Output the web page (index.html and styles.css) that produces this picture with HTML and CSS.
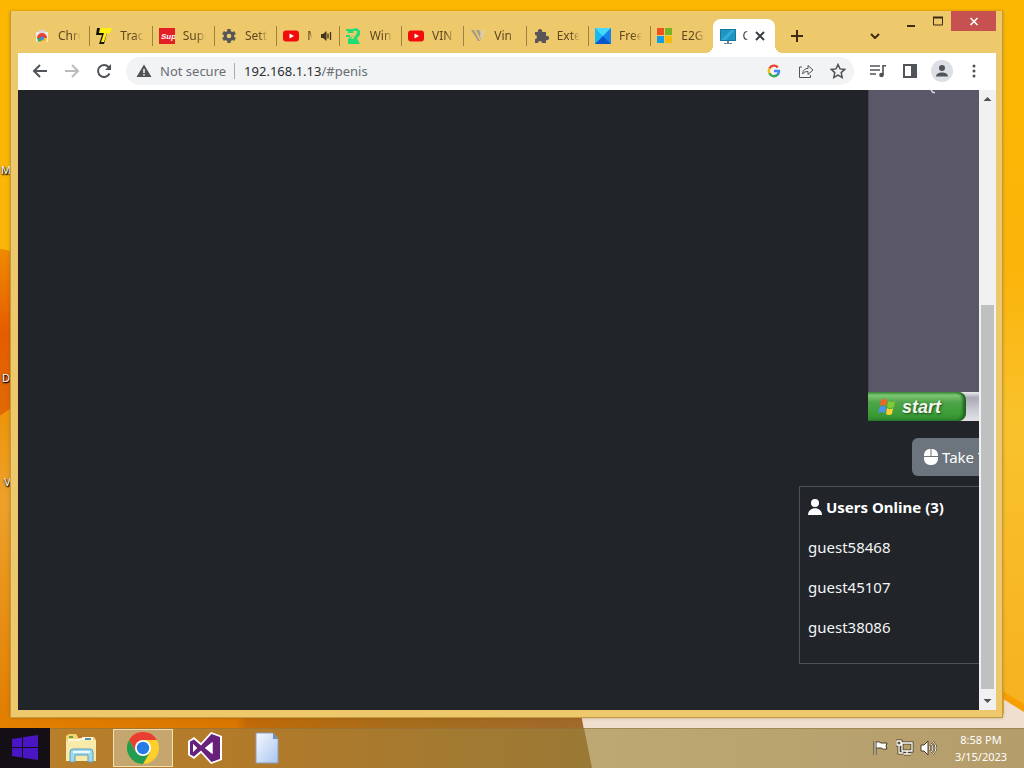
FILE: index.html
```html
<!DOCTYPE html>
<html lang="en">
<head>
<meta charset="utf-8">
<title>Desktop</title>
<link rel="stylesheet" href="styles.css">
</head>
<body>
<div class="desktop">
  <svg class="wallpaper" viewBox="0 0 1024 768" preserveAspectRatio="none" aria-hidden="true">
    <defs>
      <linearGradient id="sky" x2="0" y2="1"><stop offset="0" stop-color="#fcb800"/><stop offset=".35" stop-color="#fbb40a"/><stop offset=".55" stop-color="#f9c22c"/><stop offset="1" stop-color="#f6ae1e"/></linearGradient>
      <linearGradient id="petal" x2="0" y2="1"><stop offset="0" stop-color="#ef8a00"/><stop offset=".5" stop-color="#e65c00"/><stop offset="1" stop-color="#e06a05"/></linearGradient>
      <linearGradient id="low" x2="0" y2="1"><stop offset="0" stop-color="#ec9408"/><stop offset=".3" stop-color="#eda12a"/><stop offset="1" stop-color="#e07c00"/></linearGradient>
      <linearGradient id="floor"><stop offset="0" stop-color="#e38000"/><stop offset=".4" stop-color="#d87600"/><stop offset=".42" stop-color="#c06a08"/><stop offset=".7" stop-color="#a56d1c"/><stop offset="1" stop-color="#a1692c"/></linearGradient>
      <linearGradient id="barLeft"><stop offset="0" stop-color="#b9802c"/><stop offset=".45" stop-color="#b07a2a"/><stop offset="1" stop-color="#997936"/></linearGradient>
      <linearGradient id="barRight"><stop offset="0" stop-color="#bda873"/><stop offset="1" stop-color="#b49d6b"/></linearGradient>
    </defs>
    <path fill="url(#sky)" d="M0 0h1024v768H0z"/>
    <path fill="url(#petal)" d="M0 249q8 0 14 5v154L0 416z"/>
    <path fill="url(#low)" d="M0 416l14-10v324H0z"/>
    <path fill="url(#floor)" d="M0 714h590v16H0z"/>
    <path fill="#f0dfcf" d="M581 714h423l0-16 20 12v20H584z"/>
    <path fill="#f59f00" d="M1000 690l24 14v8l-24-15z"/>
    <path fill="url(#barLeft)" d="M0 728h600v40H0z"/>
    <path fill="url(#barRight)" d="M584 728h440v40H592z"/>
    <path stroke="#8d6c35" stroke-opacity=".5" d="M0 728.500h1024"/>
  </svg>
  <span class="shortcut shortcut-a">M</span>
  <span class="shortcut shortcut-b">D</span>
  <span class="shortcut shortcut-c">V</span>

  <main class="workspace">
    <section class="window">
      <header class="titlebar">
        <nav class="tabs" aria-label="Tabs">
          <a class="tab" href="#"><svg class="favicon" viewBox="0 0 16 16"><path fill="#f3ede6" d="M2 4h12v9.500H2z"/><path fill="#d5d9de" d="M5 2h6v3H5z"/><path fill="#e54335" d="M3 10a5 5 0 0 1 10 0z"/><path fill="#34a853" d="M3 10h5l-1 3.500H4z"/><path fill="#fbbc05" d="M8 10h5l-1 3.500H7z"/><circle cx="8" cy="10.500" r="2" fill="#4285f4"/></svg><span>Chro</span></a>
          <a class="tab" href="#"><svg class="favicon" viewBox="0 0 16 16"><path fill="#171100" d="M1 0h13v5h-3l-3 11H3l3-9H0z"/><path fill="#ffee12" d="M4 0h12l-2 5h-3L8 14H5l3-9H3z"/></svg><span>Track</span></a>
          <a class="tab" href="#"><svg class="favicon" viewBox="0 0 16 16"><path fill="#e31f25" d="M0 0h16v16H0z"/><text class="sup" x="2" y="11">Sup</text></svg><span>Supr</span></a>
          <a class="tab" href="#"><svg class="favicon" viewBox="0 0 16 16"><circle cx="8" cy="8" r="3.800" fill="none" stroke="#55565a" stroke-width="3"/><path fill="none" stroke="#55565a" stroke-width="3.400" d="M8 1v3M8 12v3M2 4.500l2.500 1.500M11.500 10l2.500 1.500M2 11.500L4.500 10M11.500 6L14 4.500"/></svg><span>Sett</span></a>
          <a class="tab" href="#"><svg class="favicon" viewBox="0 0 16 16"><rect y="2.500" width="16" height="11" rx="3" fill="#f20d0d"/><path fill="#fff" d="M6.500 5.500l4.500 2.500-4.500 2.500z"/></svg><span class="short">M</span><svg class="audio" viewBox="0 0 12 12"><path fill="#43341a" d="M1 4h2l3.500-3v10L3 8H1z"/><path fill="none" stroke="#43341a" stroke-width="1.300" d="M8 3.500v5M10.500 2v8"/></svg></a>
          <a class="tab" href="#"><svg class="favicon" viewBox="0 0 16 16"><path fill="#1fdc74" d="M2 2l9-2 3 3v4l-3 3 3 6H2v-5l6-4V5H2z"/><path fill="#eec96c" d="M7 3h4v2L7 11H5l3-5z"/><path fill="#1fdc74" d="M0 1h5v2H0zM0 7h4v2H0z"/></svg><span>Win</span></a>
          <a class="tab" href="#"><svg class="favicon" viewBox="0 0 16 16"><rect y="2.500" width="16" height="11" rx="3" fill="#f20d0d"/><path fill="#fff" d="M6.500 5.500l4.500 2.500-4.500 2.500z"/></svg><span>VIN</span></a>
          <a class="tab" href="#"><svg class="favicon" viewBox="0 0 16 16"><path fill="#a79c87" d="M1 2h3l6 11H8zM6 2h3l3 6-1 4z"/><path fill="#d9cdb5" d="M10 7l2-5h3l-4 10z"/></svg><span>Vin</span></a>
          <a class="tab" href="#"><svg class="favicon" viewBox="0 0 16 16"><path fill="#5a5658" d="M2 4h3a2.200 2.200 0 1 1 4 0h4v4a2.200 2.200 0 1 1 0 4v3H9a2 2 0 1 0-4 0H2v-4a2 2 0 1 0 0-4z"/></svg><span>Exte</span></a>
          <a class="tab" href="#"><svg class="favicon" viewBox="0 0 16 16"><path fill="#18b8f5" d="M0 0h16v16H0z"/><path fill="#45d9ff" d="M0 0h16L8 8z"/><path fill="#1684ea" d="M16 0v16L8 8z"/><path fill="#0b55c9" d="M0 16l8-8 8 8z"/></svg><span>Free</span></a>
          <a class="tab" href="#"><svg class="favicon" viewBox="0 0 16 16"><path fill="#f2501f" d="M0 0h7v7H0z"/><path fill="#76b520" d="M8 0h7v7H8z"/><path fill="#129ee8" d="M0 8h7v7H0z"/><path fill="#fdb800" d="M8 8h7v7H8z"/></svg><span>E2G</span></a>
          <a class="tab active" href="#"><svg class="favicon" viewBox="0 0 16 16"><path fill="#137b99" d="M0 1h16v12H0z"/><path fill="#1c94c4" d="M1 2h14v10H1z"/><path fill="#4bc2e1" d="M1 12L11 2h4L6 12z" opacity=".5"/><path fill="#6c8791" d="M7 13h2v2h3v1H4v-1h3z"/></svg><span class="short">C</span><svg class="tab-close" viewBox="0 0 10 10"><path d="M1 1l8 8M9 1L1 9"/></svg></a>
        </nav>
        <button class="new-tab" aria-label="New tab"><svg viewBox="0 0 12 12" width="12" height="12"><path d="M6 0v12M0 6h12"/></svg></button>
        <button class="tab-search" aria-label="Search tabs"><svg viewBox="0 0 10 6" width="10" height="6"><path d="M1 1l4 4 4-4"/></svg></button>
        <div class="controls">
          <button class="minimize" aria-label="Minimize"><svg viewBox="0 0 12 12" width="12" height="12"><path d="M2 11h8" stroke-width="2"/></svg></button>
          <button class="maximize" aria-label="Maximize"><svg viewBox="0 0 12 12" width="12" height="12"><path d="M1.500 2v8h9V2" stroke-width="1"/><path d="M1 2.500h10" stroke-width="2"/></svg></button>
          <button class="close" aria-label="Close"><svg viewBox="0 0 12 12" width="12" height="12"><path d="M2.500 3l7 7M9.500 3l-7 7" stroke-width="1.600"/></svg></button>
        </div>
      </header>

      <div class="toolbar">
        <button class="tool" aria-label="Back"><svg viewBox="0 0 16 16"><path d="M15 8H2M8 2L2 8l6 6"/></svg></button>
        <button class="tool faded" aria-label="Forward"><svg viewBox="0 0 16 16"><path d="M1 8h13M8 2l6 6-6 6"/></svg></button>
        <button class="tool" aria-label="Reload"><svg viewBox="0 0 16 16"><path d="M13.500 10.500A6 6 0 1 1 12.500 4L14 6"/><path class="solid" d="M15 1v6H9z"/></svg></button>
        <div class="omnibox">
          <svg class="warning" viewBox="0 0 16 16"><path fill="#505357" d="M8 1.500L15.500 14H.5z"/><path stroke="#f1f3f4" stroke-width="1.600" d="M8 6v4M8 11v1.600"/></svg>
          <span class="security">Not secure</span>
          <a class="address" href="#">192.168.1.13<span>/#penis</span></a>
          <svg class="google" viewBox="0 0 14 14"><g fill="none" stroke-width="2.400"><path stroke="#ea4335" d="M2.400 4.500A5 5 0 0 1 10.800 3.500"/><path stroke="#fbbc05" d="M2.500 9.400a5 5 0 0 1 0-4.900"/><path stroke="#34a853" d="M2.400 9.300A5 5 0 0 0 10.500 10.700"/><path stroke="#4285f4" d="M7 7h5a5 5 0 0 1-1.600 3.800"/></g></svg>
          <button class="tool" aria-label="Share"><svg class="thin" viewBox="0 0 16 16"><path d="M4 4H1.500v10.500h11V12M4.500 11c.5-4 2.500-5.500 5.500-5.500V2.500L15 7l-5 4.500V8.500c-2.500 0-4 .5-5.500 2.500z"/></svg></button>
          <button class="tool" aria-label="Bookmark"><svg class="thin" viewBox="0 0 16 16"><path stroke-width="1.500" d="M8 1.500l2 4.400 4.700.5-3.500 3.200 1 4.800L8 12l-4.200 2.400 1-4.800L1.300 6.400 6 5.900z"/></svg></button>
        </div>
        <button class="tool media" aria-label="Media"><svg viewBox="0 0 16 16"><path stroke-width="1.600" d="M0 3h10M0 7h10M0 11h6M13 12V2.800h3"/><circle class="solid" cx="11.500" cy="12" r="2.300"/></svg></button>
        <button class="tool panel" aria-label="Side panel"><svg viewBox="0 0 16 16"><path d="M2 2h12v12H2z"/><path class="solid" d="M9 2h5v12H9z"/></svg></button>
        <button class="tool profile" aria-label="Profile"><svg viewBox="0 0 16 16"><circle class="solid" cx="8" cy="5" r="3"/><path class="solid" d="M2 13.500c0-5.500 12-5.500 12 0z"/></svg></button>
        <button class="tool menu" aria-label="Menu"><svg viewBox="0 0 16 16"><circle class="solid" cx="8" cy="3" r="1.500"/><circle class="solid" cx="8" cy="8" r="1.500"/><circle class="solid" cx="8" cy="13" r="1.500"/></svg></button>
      </div>

      <div class="viewport">
        <article class="page">
          <div class="screen">
            <div class="screen-desktop"><svg width="8" height="5" viewBox="0 0 8 5"><path fill="none" stroke="#d9d9de" stroke-width="1.500" d="M1 0l2 2.500h2"/></svg></div>
            <div class="xp-bar"><button class="xp-start"><svg viewBox="0 0 18 18" width="18" height="18"><path fill="#f0642a" d="M3 2q3-2 6 0L8 8q-3-2-6 0z"/><path fill="#82ca35" d="M10 3q4 2 7 0l-1 6q-4 2-7 0z"/><path fill="#4e91f5" d="M2 9q3-2 6 0l-1 6q-3-2-7 0z"/><path fill="#fbd034" d="M9 10q3 2 6 0l-1 6q-3 2-6 0z"/></svg>start</button></div>
          </div>
          <button class="take-turn"><svg viewBox="0 0 14 16" width="14" height="16"><path fill="#fff" d="M0 7V6a6 6 0 0 1 6.500-6v7zM7.500 0A6 6 0 0 1 14 6v1H7.500zM0 8h14v2a6 6 0 0 1-6 6H6a6 6 0 0 1-6-6z"/></svg>Take Turn</button>
          <section class="users">
            <h1><svg viewBox="0 0 14 16" width="14" height="16"><circle cx="7" cy="4" r="4" fill="#fff"/><path fill="#fff" d="M0 16c0-9 14-9 14 0z"/></svg>Users Online (3)</h1>
            <ul><li>guest58468</li><li>guest45107</li><li>guest38086</li></ul>
          </section>
        </article>
        <div class="scrollbar" aria-hidden="true">
          <svg viewBox="0 0 17 17"><path fill="#505050" d="M4.500 11L8.500 7l4 4z"/></svg>
          <div class="track"><div class="thumb"></div></div>
          <svg viewBox="0 0 17 17"><path fill="#505050" d="M4.500 6L8.500 10l4-4z"/></svg>
        </div>
      </div>
    </section>
  </main>

  <footer class="taskbar">
    <button class="start" aria-label="Start"><svg viewBox="0 0 28 28" width="28" height="28"><path fill="#4a16c4" d="M1 5l10-1.500V13H1zM12 3.300L27 1v12H12zM1 14h10v9.500L1 22zM12 14h15v12l-15-2.300z"/></svg></button>
    <button class="app" aria-label="File Explorer"><svg viewBox="0 0 32 32" width="32" height="32"><path fill="#f1d46e" d="M1 4l3-2h7l2 3h16l2 3v20H1z"/><path fill="#fff8d7" d="M3 7h11l2-2h12v5H3z"/><path fill="#6e9d4e" d="M4 4h4v2H4z"/><path fill="#ba693b" d="M13 4h4v2h-4z"/><path fill="#5093b4" d="M20 6h6v2h-6z"/><path fill="#f8ebaa" d="M1 9h13l2-1h15v21H1z"/><path fill="#a1d8ec" stroke="#579fbb" d="M5 30V20q0-3 3-3h17q3 0 3 3v10h-5v-7H10v7z"/><path stroke="#e9fbff" stroke-width="2" d="M8 20h17"/></svg></button>
    <button class="app current" aria-label="Chrome"><svg viewBox="0 0 32 32" width="32" height="32"><circle cx="16" cy="16" r="16" fill="#fdcf2c"/><path fill="#e93e32" d="M2.100 8A16 16 0 0 1 29.900 8H16l-7 12z"/><path fill="#239c50" d="M2.100 8A16 16 0 0 0 16 32l7-12H9z"/><circle cx="16" cy="16" r="8" fill="#fff"/><circle cx="16" cy="16" r="6.200" fill="#287be4"/></svg></button>
    <button class="app" aria-label="Visual Studio"><svg viewBox="0 0 34 32" width="34" height="32"><path fill="#fff" d="M0 9l6-4 7 6L23 0l11 4v24l-11 4-10-11-7 6-6-4z"/><path fill="#68217a" fill-rule="evenodd" d="M2 9.500l4-2 7 6L23.500 2l8.500 3v22l-8.500 3L13 18.500l-7 6-4-2zM5 12v8l4-4zM17 16l7.500 6V10z"/><path fill="#fff" d="M5 12v8l4-4zM17 16l7.500 6V10z"/></svg></button>
    <button class="app" aria-label="Document"><svg viewBox="0 0 26 32" width="26" height="32"><defs><linearGradient id="sheet" x2="1" y2="1"><stop stop-color="#f6f9ff"/><stop offset="1" stop-color="#a9c5ef"/></linearGradient></defs><path fill="url(#sheet)" stroke="#8b9fbd" d="M2 1h17l5 6v24H2z"/><path fill="#6f8fbd" d="M19 1l5 6h-5z"/></svg></button>
    <div class="tray">
      <svg viewBox="0 0 18 18" width="18" height="18"><path stroke="#4b3e27" stroke-width="3" d="M3 2v14"/><path fill="#fff" stroke="#4b3e27" d="M4 3q3-1 5 1h6l-1 3 1 3q-4 1-6-1H4z"/><path stroke="#fff" d="M3 2v14"/></svg>
      <svg viewBox="0 0 18 18" width="18" height="18"><g fill="none"><path stroke="#4b3e27" stroke-width="3" d="M6 4h10v8H6zM8 15h7M11 12v3M1 2h4v4H1zM3 6v8h4"/><path stroke="#fff" stroke-width="1.300" d="M6 4h10v8H6zM8 15h7M11 12v3M1 2h4v4H1zM3 6v8h4"/></g></svg>
      <svg viewBox="0 0 18 18" width="18" height="18"><g fill="none"><path stroke="#4b3e27" stroke-width="2" d="M9 6.500q2 2.500 0 5M11 5q4 4 0 8M13 3q6 6 0 12"/><path stroke="#fff" d="M9 6.500q2 2.500 0 5M11 5q4 4 0 8M13 3q6 6 0 12"/></g><path fill="#fff" stroke="#4b3e27" d="M1 6h3l4-4v14l-4-4H1z"/></svg>
    </div>
    <time class="clock"><span>8:58 PM</span><span>3/15/2023</span></time>
  </footer>
</div>
</body>
</html>
```
FILE: styles.css
```css
* { box-sizing: border-box; }
body { margin: 0; font-family: "Noto Sans", "Open Sans", sans-serif; }
button { border: 0; padding: 0; margin: 0; background: none; font: inherit; color: inherit; flex-shrink: 0; }
a { color: inherit; text-decoration: none; }
svg { display: block; flex-shrink: 0; }

.desktop { position: relative; height: 100vh; display: flex; flex-direction: column; overflow: hidden; }
.wallpaper { position: absolute; inset: 0; width: 100%; height: 100%; }
.shortcut { position: absolute; font-size: 11px; line-height: 16px; color: #fff; text-shadow: 0 1px 2px #000, 1px 1px 1px #000; }
.shortcut-a { left: 1px; top: 162px; }
.shortcut-b { left: 2px; top: 370px; }
.shortcut-c { left: 4px; top: 474px; }

.workspace { position: relative; flex: 1; min-height: 0; display: flex; padding: 11px 21px 10px 10px; }
.window { flex: 1; min-width: 0; display: flex; flex-direction: column; padding: 0 6px 7px 7px; background: #eec96c; border: 1px solid #c29a45; border-top: 0; box-shadow: 0 0 3px #7d510066; }

.titlebar { display: flex; height: 42px; flex-shrink: 0; align-items: flex-end; color: #3d2a10; }
.titlebar button path, .tab-close path { fill: none; stroke: currentColor; }
.tabs { display: flex; width: 748px; height: 34px; margin-left: 9px; }
.tab { position: relative; flex: 1 1 0; min-width: 0; display: flex; align-items: center; gap: 8px; padding: 0 8px 0 7px; font-size: 12px; line-height: 16px; color: #5c4720; }
.tab::after { content: ""; position: absolute; right: -1px; top: 7px; width: 1px; height: 20px; background: #a18140; }
.tab span { flex: 1; min-width: 0; overflow: hidden; white-space: nowrap; -webkit-mask-image: linear-gradient(90deg, #000 60%, transparent); mask-image: linear-gradient(90deg, #000 60%, transparent); }
.tab .short { flex: 0 0 5px; }
.favicon { width: 16px; height: 16px; }
.sup { font: italic bold 8px "Liberation Sans", sans-serif; fill: #fff; }
.audio { width: 12px; height: 12px; }
.tab.active { gap: 7px; background: #fff; border-radius: 8px 8px 0 0; color: #3c4043; }
.tab.active::before { content: ""; position: absolute; left: -8px; right: -8px; bottom: 0; height: 8px; background: radial-gradient(circle at 0 0, transparent 8px, #fff 8px) 0 0 / 8px 8px no-repeat, radial-gradient(circle at 100% 0, transparent 8px, #fff 8px) 100% 0 / 8px 8px no-repeat; }
.tab.active::after, .tab:nth-last-child(2)::after { display: none; }
.tab-close { width: 10px; height: 10px; }
.tab-close path { stroke-width: 2; }
.new-tab, .tab-search { display: grid; place-items: center; height: 34px; width: 28px; stroke-width: 2; }
.new-tab { margin-left: 8px; }
.tab-search { margin-left: auto; margin-right: 8px; }
.controls { align-self: flex-start; display: flex; }
.controls button { display: grid; place-items: center; width: 27px; height: 20px; }
.controls .close { width: 45px; background: #c75050; color: #fff; }

.toolbar { display: flex; height: 37px; flex-shrink: 0; align-items: center; padding: 0 8px 2px; background: #fff; color: #505357; }
.tool { display: grid; place-items: center; width: 32px; height: 28px; }
.toolbar > .tool:nth-child(1) { margin-left: -2px; }
.tool svg { width: 16px; height: 16px; fill: none; stroke: currentColor; stroke-width: 2; }
.tool .thin { stroke-width: 1; }
.tool .solid { fill: currentColor; stroke: none; }
.faded { color: #b9bbbd; }
.omnibox { flex: 1; min-width: 0; display: flex; align-items: center; height: 28px; margin: 0 8px 0 6px; padding-left: 10px; border-radius: 14px; background: #f1f3f4; font-size: 13px; line-height: 20px; }
.warning { width: 16px; height: 16px; margin-right: 8px; }
.security { padding-right: 8px; border-right: 1px solid #a9acb0; line-height: 16px; color: #6a6d72; }
.address { flex: 1; min-width: 0; padding-left: 9px; color: #2c2e31; }
.address span { color: #6a6d72; }
.google { width: 14px; height: 14px; margin-right: 9px; }
.profile { width: 22px; height: 22px; margin: 0 5px; border-radius: 11px; background: #dce0e6; }
.profile svg { width: 16px; height: 16px; }
.menu { margin-right: -2px; }

.viewport { flex: 1; min-height: 0; display: flex; }
.page { flex: 1; min-width: 0; display: flex; flex-direction: column; align-items: flex-end; overflow: hidden; padding-bottom: 46px; background: #212529; color: #f3f4f5; font-size: 15px; line-height: 24px; }
.screen { flex: 1; width: 111px; display: flex; flex-direction: column; }
.screen-desktop { flex: 1; padding-left: 61px; background: #5a5769; border-left: 1px solid #494754; }
.xp-bar { display: flex; height: 29px; background: linear-gradient(#e9e9ee, #a9a9b5 20%, #c9c9d2 60%, #e2e2e6); }
.xp-start { display: flex; align-items: center; gap: 6px; width: 98px; padding-left: 10px; border-radius: 0 8px 8px 0; background: linear-gradient(#4d9f47, #7cc673 12%, #4fa54a 35%, #3c9d36 75%, #2f8a2f); box-shadow: inset -3px 0 3px #1b621f; color: #f3f7f0; font: italic bold 18px/24px "Liberation Sans", sans-serif; text-shadow: 1px 1px 2px #214c1d; }
.take-turn { display: flex; align-items: center; gap: 4px; width: 67px; height: 38px; margin: 17px 0 10px; padding-left: 12px; overflow: hidden; white-space: nowrap; background: #6c757d; border-radius: 6px 0 0 6px; color: #fff; }
.users { width: 180px; padding: 8px; border: 1px solid #4e5256; border-right: 0; }
.users h1 { display: flex; align-items: center; gap: 4px; margin: 0 0 16px; font-size: 15px; line-height: 24px; white-space: nowrap; color: #fff; }
.users ul { display: grid; gap: 16px; margin: 0 0 16px; padding: 0; list-style: none; }
.scrollbar { width: 17px; flex-shrink: 0; display: flex; flex-direction: column; background: #f1f1f1; }
.scrollbar > svg { width: 17px; height: 17px; }
.track { flex: 1; display: flex; align-items: flex-end; padding: 0 2px 4px; }
.thumb { width: 100%; height: 66%; background: #bfc1c1; }

.taskbar { position: relative; display: flex; height: 40px; flex-shrink: 0; align-items: center; color: #fff; }
.taskbar button { display: grid; place-items: center; height: 40px; }
.taskbar .start { width: 50px; background: #140f14; }
.taskbar .app { width: 62px; }
.taskbar .current { width: 60px; height: 38px; margin: 0 1px; border: 1px solid #f3dfb1; background: #c5a66f; }
.tray { display: flex; gap: 6px; margin-left: auto; }
.clock { display: flex; flex-direction: column; align-items: center; width: 86px; font-size: 11px; line-height: 17px; }
```
